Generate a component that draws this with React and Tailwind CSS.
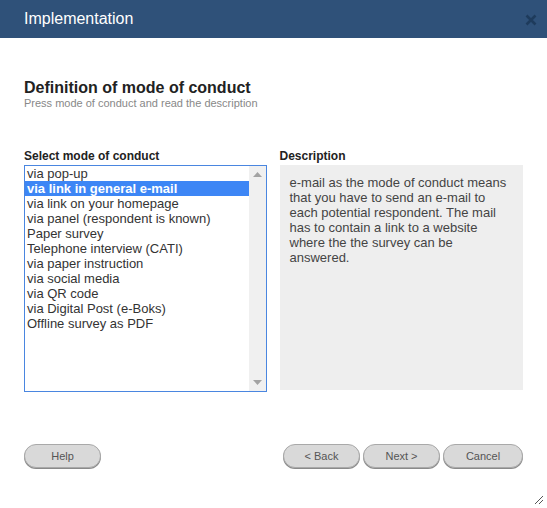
import React from "react";

const items = [
  "via pop-up",
  "via link in general e-mail",
  "via link on your homepage",
  "via panel (respondent is known)",
  "Paper survey",
  "Telephone interview (CATI)",
  "via paper instruction",
  "via social media",
  "via QR code",
  "via Digital Post (e-Boks)",
  "Offline survey as PDF",
];

const descLines = [
  "e-mail as the mode of conduct means",
  "that you have to send an e-mail to",
  "each potential respondent. The mail",
  "has to contain a link to a website",
  "where the the survey can be",
  "answered.",
];

function Btn({ children, className = "" }) {
  return (
    <button
      className={
        "h-[24px] rounded-full bg-[#d9d9d9] border border-[#a9a9a9] shadow-[0_1px_0_#8a8a8a] text-[11px] text-[#555] " +
        className
      }
    >
      {children}
    </button>
  );
}

export default function App() {
  return (
    <div
      className="relative w-[547px] h-[508px] bg-white overflow-hidden"
      style={{ fontFamily: '"Liberation Sans", Arial, sans-serif' }}
    >
      <div className="h-[38px] bg-[#2f5179] flex items-center justify-between pl-6 pr-[10px]">
        <span className="text-white text-[16px]">Implementation</span>
        <svg width="12" height="12" viewBox="0 0 12 12" className="mt-[2px]">
          <path d="M1.5 1.5 L10.5 10.5 M10.5 1.5 L1.5 10.5" stroke="#1e3b5c" strokeWidth="2.6" />
        </svg>
      </div>

      <div className="px-6 pt-[40px]">
        <div className="text-[16px] leading-[19px] font-bold text-[#222]">
          Definition of mode of conduct
        </div>
        <div className="text-[11px] leading-[13px] text-[#888]">
          Press mode of conduct and read the description
        </div>

        <div className="flex gap-[13px] mt-[39px]">
          <div className="w-[243px]">
            <div className="text-[12px] leading-[14px] font-bold text-[#222] mb-[2px]">
              Select mode of conduct
            </div>
            <div className="h-[227px] border border-[#4a86e0] flex">
              <div className="flex-1 text-[13px] leading-[15px] text-[#333]">
                {items.map((it, i) => (
                  <div
                    key={it}
                    className={
                      i === 1
                        ? "pl-[2px] bg-[#3d86f5] text-white font-bold"
                        : "pl-[2px]"
                    }
                  >
                    {it}
                  </div>
                ))}
              </div>
              <div className="w-[17px] bg-[#f0f0f0] flex flex-col items-center justify-between py-[6px]">
                <svg width="9" height="5" viewBox="0 0 9 5">
                  <path d="M0 5 L4.5 0 L9 5 Z" fill="#a3a3a3" />
                </svg>
                <svg width="9" height="5" viewBox="0 0 9 5">
                  <path d="M0 0 L4.5 5 L9 0 Z" fill="#a3a3a3" />
                </svg>
              </div>
            </div>
          </div>

          <div className="w-[244px]">
            <div className="text-[12px] leading-[14px] font-bold text-[#222] mb-[2px]">
              Description
            </div>
            <div className="h-[225px] bg-[#eeeeee] pl-[10px] pr-[4px] pt-[10px] text-[13px] leading-[15px] text-[#444] whitespace-nowrap">
              {descLines.map((l) => (
                <div key={l}>{l}</div>
              ))}
            </div>
          </div>
        </div>

        <div className="flex justify-between mt-[52px]">
          <Btn className="w-[77px]">Help</Btn>
          <div className="flex gap-[3px]">
            <Btn className="w-[77px]">&lt; Back</Btn>
            <Btn className="w-[77px]">Next &gt;</Btn>
            <Btn className="w-[80px]">Cancel</Btn>
          </div>
        </div>
      </div>

      <svg className="absolute right-[3px] bottom-[3px]" width="10" height="10" viewBox="0 0 10 10">
        <path d="M1 9 L9 1 M5 9 L9 5" stroke="#555" strokeWidth="1" />
      </svg>
    </div>
  );
}
